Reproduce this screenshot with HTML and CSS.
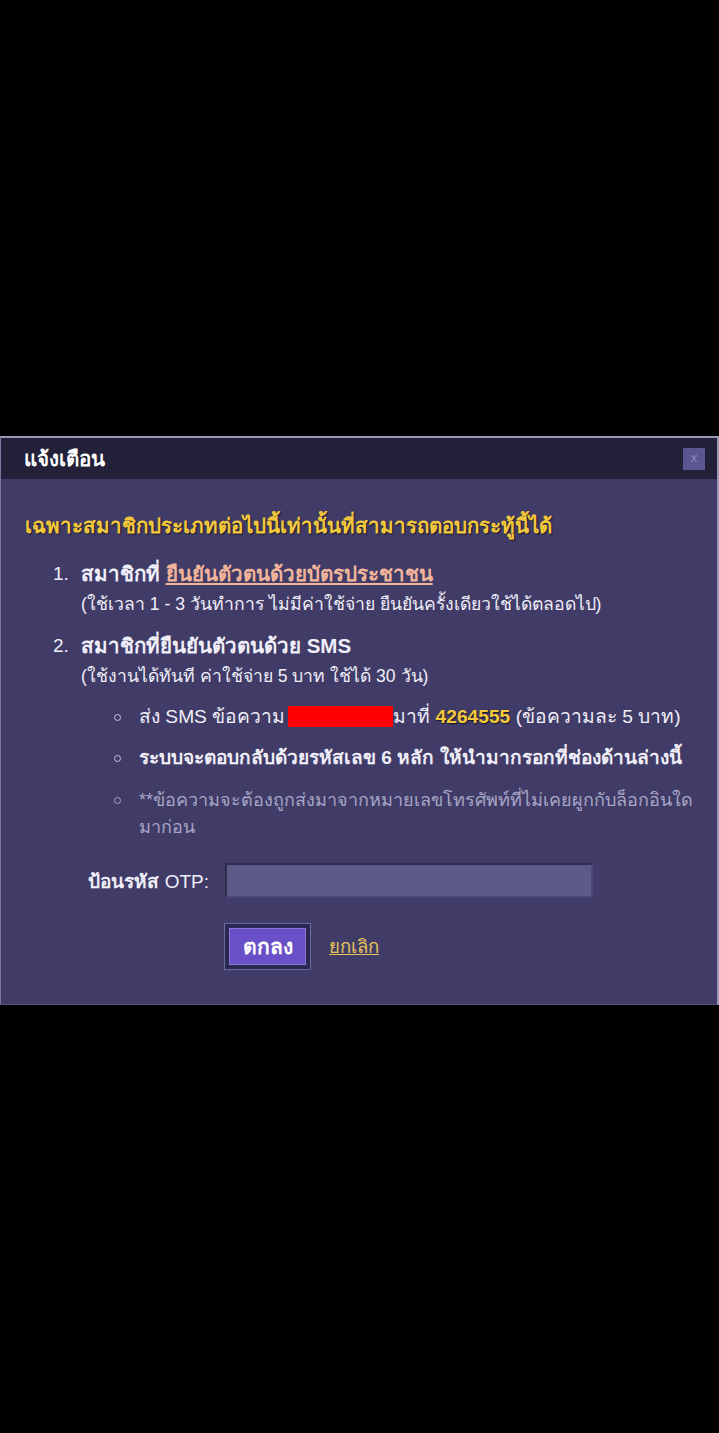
FILE: index.html
```html
<!DOCTYPE html>
<html lang="th">
<head>
<meta charset="utf-8">
<link rel="stylesheet" href="styles.css">
</head>
<body>
<div class="dialog">
  <div class="header">
    <span class="title">แจ้งเตือน</span>
    <span class="close">x</span>
  </div>
  <div class="content">
    <p class="lead">เฉพาะสมาชิกประเภทต่อไปนี้เท่านั้นที่สามารถตอบกระทู้นี้ได้</p>
    <ol class="types">
      <li class="type">
        <span class="type-num">1.</span>
        <div class="type-body">
          <div class="strong">สมาชิกที่ <a class="idlink" href="#">ยืนยันตัวตนด้วยบัตรประชาชน</a></div>
          <div class="note">(ใช้เวลา 1 - 3 วันทำการ ไม่มีค่าใช้จ่าย ยืนยันครั้งเดียวใช้ได้ตลอดไป)</div>
        </div>
      </li>
      <li class="type">
        <span class="type-num">2.</span>
        <div class="type-body">
          <div class="strong">สมาชิกที่ยืนยันตัวตนด้วย SMS</div>
          <div class="note">(ใช้งานได้ทันที ค่าใช้จ่าย 5 บาท ใช้ได้ 30 วัน)</div>
          <ul class="steps">
            <li class="step"><span>ส่ง SMS ข้อความ<span class="redact"></span>มาที่ <b class="num">4264555</b> (ข้อความละ 5 บาท)</span></li>
            <li class="step bold"><span>ระบบจะตอบกลับด้วยรหัสเลข 6 หลัก ให้นำมากรอกที่ช่องด้านล่างนี้</span></li>
            <li class="step muted"><span>**ข้อความจะต้องถูกส่งมาจากหมายเลขโทรศัพท์ที่ไม่เคยผูกกับ<span class="nowrap">ล็อกอินใด</span> มาก่อน</span></li>
          </ul>
        </div>
      </li>
    </ol>
    <div class="otp-row">
      <label class="otp-label"><b>ป้อนรหัส</b> OTP:</label>
      <input class="otp-input" type="text">
    </div>
    <div class="actions">
      <span class="btn-wrap"><button class="btn">ตกลง</button></span>
      <a class="cancel" href="#">ยกเลิก</a>
    </div>
  </div>
</div>
</body>
</html>
```
FILE: styles.css
```css
html, body {
  margin: 0;
  padding: 0;
  background: #000;
}
body {
  font-family: "Liberation Sans", "Noto Sans", sans-serif;
  padding-top: 436px;
  height: 1433px;
  box-sizing: border-box;
}
.dialog {
  border-top: 2px solid #9c9ab8;
  border-left: 1px solid #7a78a0;
  border-right: 2px solid #9c9ab8;
  border-bottom: 1px solid #55527a;
  background: #403c67;
  height: 569px;
  box-sizing: border-box;
}
.header {
  height: 41px;
  background: #23213a;
  display: flex;
  align-items: center;
  justify-content: space-between;
  padding: 0 12px 0 23px;
}
.title {
  color: #fff;
  font-weight: bold;
  font-size: 20.5px;
}
.close {
  width: 22px;
  height: 22px;
  background: #5a5790;
  color: #8c8ab8;
  font-size: 13px;
  line-height: 20px;
  text-align: center;
}
.content {
  padding: 34px 20px 0 24px;
  color: #f0eef8;
}
.lead {
  margin: 0;
  color: #f4c83c;
  font-weight: bold;
  font-size: 20.5px;
  line-height: 26px;
  text-shadow: 1px 1px 1px #1a1828;
  white-space: nowrap;
}
.types {
  list-style: none;
  margin: 22px 0 0 0;
  padding-left: 28px;
}
.type {
  display: flex;
  margin-bottom: 17px;
}
.type:last-child {
  margin-bottom: 0;
}
.type-num {
  flex: none;
  width: 28px;
  font-size: 19px;
  line-height: 26px;
}
.type-body {
  flex: 1;
}
.strong {
  font-weight: bold;
  font-size: 20.5px;
  line-height: 26px;
}
.idlink {
  color: #f2b49a;
  text-decoration: underline;
}
.note {
  font-size: 17.6px;
  line-height: 24px;
  margin-top: 5px;
}
.steps {
  list-style: none;
  margin: 15px 0 0 0;
  padding-left: 33px;
}
.step {
  display: flex;
  gap: 18px;
  line-height: 28px;
  margin-bottom: 13px;
  font-size: 19.2px;
}
.step::before {
  content: "";
  flex: none;
  width: 5px;
  height: 5px;
  margin-top: 11px;
  border: 1.5px solid #c8c6e0;
  border-radius: 50%;
}
.step.bold {
  font-weight: bold;
  font-size: 19.1px;
  margin-bottom: 15px;
}
.step.muted {
  color: #a8a6c6;
  font-size: 18px;
  line-height: 27px;
  margin-bottom: 0;
}
.step.muted::before {
  border-color: #a8a6c6;
  margin-top: 10px;
}
.nowrap {
  white-space: nowrap;
}
.redact {
  display: inline-block;
  width: 105px;
  height: 21px;
  margin-left: 3px;
  background: #ff0000;
  vertical-align: -4px;
}
.num {
  color: #f4c83c;
  text-shadow: 1px 1px 1px #1a1828;
}
.otp-row {
  display: flex;
  align-items: center;
  margin-top: 22px;
  padding-left: 34px;
}
.otp-label {
  width: 150px;
  text-align: right;
  font-size: 19px;
  color: #f0eef8;
}
.otp-input {
  margin-left: 16px;
  width: 368px;
  height: 35px;
  box-sizing: border-box;
  background: #5e5a88;
  border: 2px solid #2e2b4e;
  border-right-color: #4c4878;
  border-bottom-color: #4c4878;
  outline: none;
}
.actions {
  display: flex;
  align-items: center;
  margin-top: 25px;
  padding-left: 199px;
  gap: 18px;
}
.btn-wrap {
  display: inline-block;
  padding: 4px;
  background: #2a2750;
  border: 1px solid #6a68a0;
}
.btn {
  display: block;
  width: 77px;
  height: 37px;
  padding: 0;
  background: #6a50c6;
  border: 1px solid #8a78d8;
  color: #fff;
  font-weight: bold;
  font-size: 21px;
  font-family: inherit;
}
.cancel {
  color: #e8c25a;
  font-size: 18.6px;
  text-decoration: underline;
}
```
